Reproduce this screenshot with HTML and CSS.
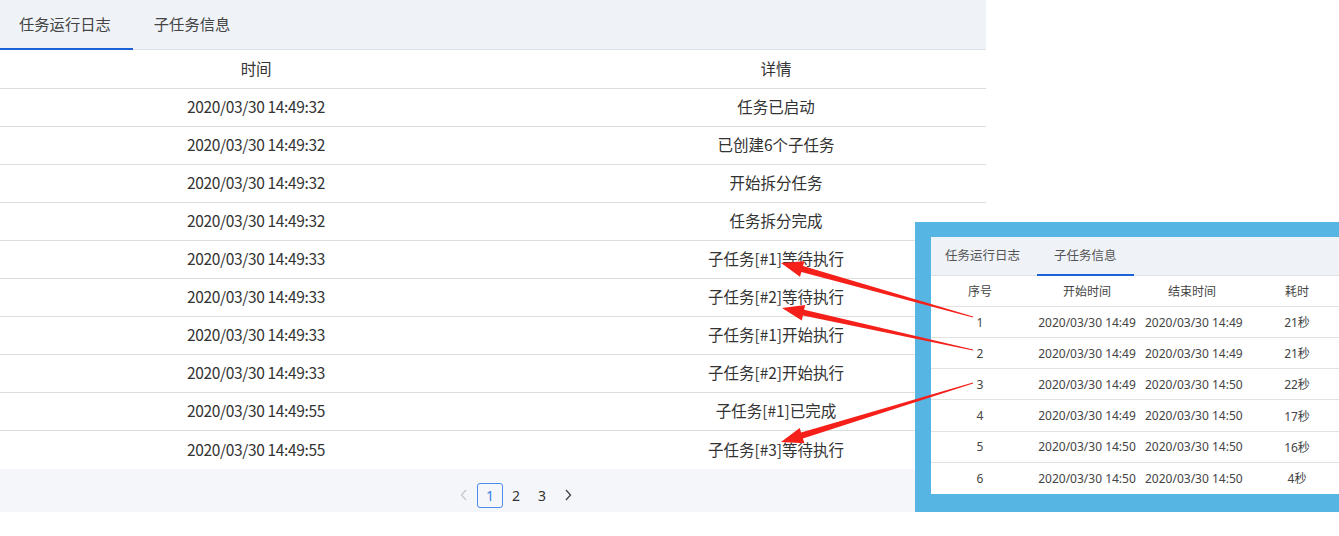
FILE: index.html
```html
<!DOCTYPE html>
<html lang="zh-CN">
<head>
<meta charset="utf-8">
<title>任务运行日志</title>
<link rel="stylesheet" href="styles.css">
</head>
<body>
<div class="page">
  <section class="panel">
    <nav class="tabs">
      <div class="tab active">任务运行日志</div>
      <div class="tab">子任务信息</div>
    </nav>
    <div class="log-table">
      <div class="row head"><div class="c-time">时间</div><div class="c-detail">详情</div></div>
      <div class="row"><div class="c-time">2020/03/30 14:49:32</div><div class="c-detail">任务已启动</div></div>
      <div class="row"><div class="c-time">2020/03/30 14:49:32</div><div class="c-detail">已创建6个子任务</div></div>
      <div class="row"><div class="c-time">2020/03/30 14:49:32</div><div class="c-detail">开始拆分任务</div></div>
      <div class="row"><div class="c-time">2020/03/30 14:49:32</div><div class="c-detail">任务拆分完成</div></div>
      <div class="row"><div class="c-time">2020/03/30 14:49:33</div><div class="c-detail">子任务[#1]等待执行</div></div>
      <div class="row"><div class="c-time">2020/03/30 14:49:33</div><div class="c-detail">子任务[#2]等待执行</div></div>
      <div class="row"><div class="c-time">2020/03/30 14:49:33</div><div class="c-detail">子任务[#1]开始执行</div></div>
      <div class="row"><div class="c-time">2020/03/30 14:49:33</div><div class="c-detail">子任务[#2]开始执行</div></div>
      <div class="row"><div class="c-time">2020/03/30 14:49:55</div><div class="c-detail">子任务[#1]已完成</div></div>
      <div class="row last"><div class="c-time">2020/03/30 14:49:55</div><div class="c-detail">子任务[#3]等待执行</div></div>
    </div>
    <div class="pager">
      <span class="pg-arrow disabled">
        <svg width="10" height="12" viewBox="0 0 10 12"><path d="M7 1 L2.5 6 L7 11" fill="none" stroke="currentColor" stroke-width="1.3"/></svg>
      </span>
      <span class="pg-num current">1</span>
      <span class="pg-num">2</span>
      <span class="pg-num">3</span>
      <span class="pg-arrow">
        <svg width="10" height="12" viewBox="0 0 10 12"><path d="M3 1 L7.5 6 L3 11" fill="none" stroke="currentColor" stroke-width="1.3"/></svg>
      </span>
    </div>
  </section>

  <div class="inset">
    <div class="inset-inner">
      <nav class="itabs">
        <div class="itab">任务运行日志</div>
        <div class="itab active">子任务信息</div>
      </nav>
      <div class="sub-table">
        <div class="srow shead"><div>序号</div><div>开始时间</div><div>结束时间</div><div>耗时</div></div>
        <div class="sbody">
          <div class="srow"><div>1</div><div>2020/03/30 14:49</div><div>2020/03/30 14:49</div><div>21秒</div></div>
          <div class="srow"><div>2</div><div>2020/03/30 14:49</div><div>2020/03/30 14:49</div><div>21秒</div></div>
          <div class="srow"><div>3</div><div>2020/03/30 14:49</div><div>2020/03/30 14:50</div><div>22秒</div></div>
          <div class="srow"><div>4</div><div>2020/03/30 14:49</div><div>2020/03/30 14:50</div><div>17秒</div></div>
          <div class="srow"><div>5</div><div>2020/03/30 14:50</div><div>2020/03/30 14:50</div><div>16秒</div></div>
          <div class="srow"><div>6</div><div>2020/03/30 14:50</div><div>2020/03/30 14:50</div><div>4秒</div></div>
        </div>
      </div>
    </div>
  </div>

  <svg class="arrows" width="1339" height="536" viewBox="0 0 1339 536">
    <polygon points="781,263 804.4,261.3 803,266.1 973.1,316.5 972.9,317.5 801.4,271.9 800,276.7"/>
    <polygon points="782,308 805.2,304.9 804.1,309.8 973.1,349.5 972.9,350.5 802.9,315.6 801.8,320.5"/>
    <polygon points="781,442 804.4,443.2 802.9,438.4 973.1,383.5 972.9,382.5 801.1,432.6 799.7,427.9"/>
  </svg>
</div>
</body>
</html>
```

FILE: styles.css
```css
* { box-sizing: border-box; }
html, body { margin: 0; padding: 0; background: #fff; }
body {
  font-family: "Noto Sans", "Noto Sans CJK SC", sans-serif;
  color: #333;
  width: 1339px;
  height: 536px;
  overflow: hidden;
}
.page { position: relative; width: 1339px; height: 536px; }

.panel { width: 986px; }

.tabs {
  display: flex;
  height: 50px;
  background: #eff2f7;
  border-bottom: 1px solid #dfe2e8;
}
.tab {
  padding: 0 22px 0 19px;
  font-size: 15.3px;
  line-height: 48px;
  color: #444;
  position: relative;
}
.tab + .tab { padding-left: 21px; }
.tab.active::after {
  content: "";
  position: absolute;
  left: 0; right: 0; bottom: -1px;
  height: 2px;
  background: #1b62d9;
}

.log-table {
  font-family: "Noto Sans CJK SC", "Noto Sans", sans-serif;
  font-size: 15.5px;
}
.row {
  display: grid;
  grid-template-columns: 512px 1fr;
  height: 38px;
  padding-bottom: 3px;
  border-bottom: 1px solid #dddddd;
  align-items: center;
}
.row.head { height: 39px; }
.row.last { border-bottom: none; height: 38px; }
.c-time, .c-detail { text-align: center; white-space: nowrap; }
.c-time { letter-spacing: -0.35px; }
.c-detail { padding-left: 54px; }

.pager {
  height: 43px;
  background: #f5f6fa;
  display: flex;
  align-items: center;
  justify-content: center;
  font-size: 14px;
  padding: 9px 0 0 46px;
}
.pg-num {
  width: 26px; height: 25px;
  display: flex; align-items: center; justify-content: center;
  color: #333;
}
.pg-num.current {
  border: 1px solid #4a8beb;
  border-radius: 3px;
  color: #3b7fe6;
}
.pg-arrow {
  width: 26px; height: 25px;
  display: flex; align-items: center; justify-content: center;
  color: #444;
}
.pg-arrow.disabled { color: #c4c6cc; }

.inset {
  position: absolute;
  left: 915px; top: 222px;
  width: 424px; height: 290px;
  background: #57b5e3;
  padding: 15px 0 18px 16px;
}
.inset-inner {
  width: 100%; height: 100%;
  background: #fff;
  overflow: hidden;
  display: flex; flex-direction: column;
}
.itabs {
  display: flex;
  height: 39px;
  background: #eff2f7;
  border-bottom: 1px solid #dfe2e8;
  flex: none;
}
.itab {
  padding: 0 17px 0 14px;
  font-size: 12.5px;
  line-height: 37px;
  color: #555;
  position: relative;
}
.itab + .itab { padding: 0 17px 0 17px; }
.itab.active::after {
  content: "";
  position: absolute;
  left: 0; right: 0; bottom: -1px;
  height: 2px;
  background: #1b62d9;
}
.sub-table { flex: 1; display: flex; flex-direction: column; font-size: 12px; color: #444; }
.srow {
  display: grid;
  grid-template-columns: 98px 116px 94px 116px;
  align-items: center;
  border-bottom: 1px solid #e2e2e2;
}
.srow > div { text-align: center; white-space: nowrap; }
.shead { height: 31px; flex: none; }
.sbody { flex: 1; display: grid; grid-template-rows: repeat(6, 1fr); }
.sbody .srow:last-child { border-bottom: none; }

.arrows {
  position: absolute;
  left: 0; top: 0;
  pointer-events: none;
}
.arrows polygon { fill: #f5201a; }
```
